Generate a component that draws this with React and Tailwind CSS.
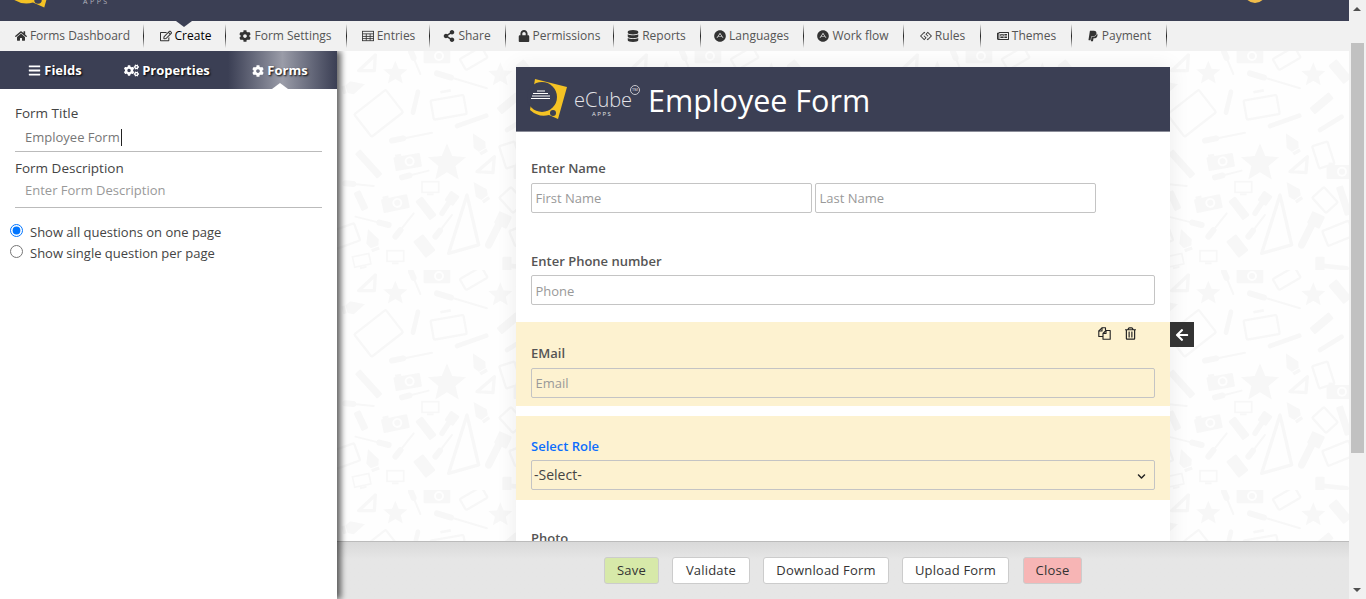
import {
  FaHome, FaRegEdit, FaCog, FaShareAlt, FaLock, FaDatabase, FaAdn, FaGg,
  FaRegNewspaper, FaPaypal, FaBars, FaCogs, FaRegTrashAlt, FaArrowLeft, FaChevronDown,
} from "react-icons/fa";

function TableIcon({ className }) {
  return (
    <svg viewBox="0 0 14 12" className={className} fill="none" stroke="currentColor" strokeWidth="1">
      <rect x="0.5" y="0.5" width="13" height="11" />
      <path d="M0.5 3.5h13M0.5 6.5h13M0.5 9h13M5 3.5v8M9.500 3.500v8" />
    </svg>
  );
}

function FilesIcon({ className }) {
  return (
    <svg viewBox="0 0 13 13" className={className} fill="none" stroke="currentColor" strokeWidth="1.100" strokeLinejoin="round">
      <path d="M5 9.500H0.800V4L4 0.800H7.500V3.500" />
      <path d="M4 0.800V4H0.800" />
      <path d="M5 12.200V6.500L8 3.500H12.200V12.200Z" />
      <path d="M8 3.500V6.500H5" />
    </svg>
  );
}

const navItems = [
  { label: "Forms Dashboard", icon: FaHome, w: "w-[143px] pl-[2px]" },
  { label: "Create", icon: FaRegEdit, w: "w-[82px] pl-[3px]", active: true },
  { label: "Form Settings", icon: FaCog, w: "w-[121px]" },
  { label: "Entries", icon: TableIcon, w: "w-[83px] pl-[2px]" },
  { label: "Share", icon: FaShareAlt, w: "w-[76px]" },
  { label: "Permissions", icon: FaLock, w: "w-[108px]" },
  { label: "Reports", icon: FaDatabase, w: "w-[87px]" },
  { label: "Languages", icon: FaAdn, w: "w-[103px]" },
  { label: "Work flow", icon: FaAdn, w: "w-[100px]" },
  { label: "Rules", icon: FaGg, w: "w-[77px] pl-[2px]" },
  { label: "Themes", icon: FaRegNewspaper, w: "w-[91px] pl-[2px]" },
  { label: "Payment", icon: FaPaypal, w: "w-[95px] pl-[1px]" },
];

function Logo({ className }) {
  return (
    <svg viewBox="0 0 44 44" className={className}>
      <path d="M10 2 L42 10 L33 42 L24 38 Q14 41 5 33 Z" fill="#f4c224" />
      <circle cx="17" cy="20" r="15" fill="#3b3f54" />
      <circle cx="28" cy="36" r="3" fill="#3b3f54" />
      <path d="M12 14h8M8 16.500h15M7 19h18M6 21.500h19" stroke="#fff" strokeWidth="1" />
    </svg>
  );
}

const ink = "#f7f7f7";

// doodle wallpaper, coordinates are 3x picture pixels
function Star({ x, y, r = 38 }) {
  const pts = [];
  for (let i = 0; i < 10; i++) {
    const rad = i % 2 ? r * 0.45 : r;
    const a = (Math.PI / 5) * i - Math.PI / 2;
    pts.push(`${x + rad * Math.cos(a)},${y + rad * Math.sin(a)}`);
  }
  return <polygon points={pts.join(" ")} />;
}

function Box({ x, y, w, h, rot = 0, outline }) {
  return (
    <rect
      x={x - w / 2}
      y={y - h / 2}
      width={w}
      height={h}
      rx="4"
      transform={`rotate(${rot} ${x} ${y})`}
      fill={outline ? "none" : undefined}
      stroke={outline ? ink : undefined}
      strokeWidth={outline ? 7 : undefined}
    />
  );
}

function Camera({ x, y, rot = 0 }) {
  return (
    <g transform={`rotate(${rot} ${x} ${y})`}>
      <rect x={x - 40} y={y - 20} width="80" height="42" rx="3" />
      <rect x={x - 34} y={y - 27} width="18" height="8" />
      <circle cx={x + 6} cy={y} r="15" fill="#fefefe" />
      <circle cx={x + 6} cy={y} r="9" />
    </g>
  );
}

function Stick({ x1, y1, x2, y2, w = 14 }) {
  return <line x1={x1} y1={y1} x2={x2} y2={y2} stroke={ink} strokeWidth={w} strokeLinecap="round" />;
}

function Brush({ x1, y1, x2, y2 }) {
  const mx = x1 + (x2 - x1) * 0.28;
  const my = y1 + (y2 - y1) * 0.28;
  return (
    <g>
      <Stick x1={x1} y1={y1} x2={mx} y2={my} w={18} />
      <Stick x1={mx} y1={my} x2={x2} y2={y2} w={6} />
    </g>
  );
}

function Nib({ x, y, rot = -30 }) {
  return (
    <g transform={`rotate(${rot} ${x} ${y})`}>
      <path d={`M${x} ${y - 35} L${x + 20} ${y + 5} L${x + 12} ${y + 22} L${x - 12} ${y + 22} L${x - 20} ${y + 5} Z`} />
      <rect x={x - 12} y={y + 25} width="24" height="10" />
    </g>
  );
}

function Tri({ points }) {
  return <polygon points={points} fill="none" stroke={ink} strokeWidth="10" strokeLinejoin="round" />;
}

function Monitor({ x, y, rot = 0 }) {
  return (
    <g transform={`rotate(${rot} ${x} ${y})`}>
      <rect x={x - 25} y={y - 20} width="50" height="32" fill="none" stroke={ink} strokeWidth="5" />
      <rect x={x - 10} y={y + 15} width="20" height="6" />
    </g>
  );
}

function Doodles() {
  return (
    <svg className="absolute inset-0 w-full h-full">
      <defs>
        <pattern id="doodle" x="0" y="-1" width="271" height="220" patternUnits="userSpaceOnUse">
          <g transform="scale(0.3333)" fill={ink}>
            <Tri points="65,62 115,15 112,62" />
            <Star x={175} y={70} />
            <Brush x1={222} y1={5} x2={250} y2={72} />
            <Camera x={300} y={18} />
            <Box x={410} y={25} w={75} h={38} rot={-30} outline />
            <Brush x1={300} y1={70} x2={450} y2={115} />
            <Star x={490} y={75} />
            <Box x={570} y={65} w={32} h={72} rot={-40} />
            <Nib x={50} y={112} rot={75} />
            <Box x={125} y={190} w={120} h={85} rot={-38} outline />
            <Stick x1={243} y1={125} x2={228} y2={188} />
            <Box x={335} y={172} w={100} h={58} rot={-10} outline />
            <rect x="310" y="120" width="32" height="8" transform="rotate(-10 325 125)" />
            <Stick x1={360} y1={228} x2={448} y2={197} />
            <Box x={515} y={160} w={25} h={75} rot={50} />
            <Stick x1={510} y1={240} x2={575} y2={200} />
            <Brush x1={165} y1={272} x2={285} y2={248} />
            <Nib x={425} y={280} rot={-30} />
            <Box x={95} y={342} w={22} h={100} rot={-42} />
            <Camera x={212} y={335} rot={-10} />
            <Star x={330} y={340} r={60} />
            <Tri points="420,365 472,320 468,368" />
            <Box x={520} y={315} w={48} h={70} rot={-18} outline />
            <Camera x={570} y={365} />
            <Brush x1={195} y1={382} x2={275} y2={362} />
            <Brush x1={25} y1={400} x2={110} y2={408} />
            <Monitor x={280} y={415} />
            <Nib x={430} y={425} rot={-35} />
            <Box x={72} y={452} w={22} h={60} rot={-25} />
            <Camera x={175} y={460} rot={-12} />
            <Box x={267} y={475} w={26} h={72} rot={-38} />
            <Box x={345} y={445} w={32} h={35} rot={35} />
            <Stick x1={315} y1={490} x2={338} y2={455} w={16} />
            <Box x={525} y={450} w={48} h={62} rot={-42} outline />
            <Box x={582} y={452} w={22} h={90} rot={-18} />
            <Brush x1={155} y1={525} x2={55} y2={500} />
            <Brush x1={175} y1={560} x2={230} y2={490} />
            <Brush x1={295} y1={560} x2={345} y2={495} />
            <Tri points="335,610 390,435 425,585" />
            <Box x={498} y={510} w={42} h={40} rot={25} />
            <Stick x1={455} y1={585} x2={485} y2={525} w={22} />
            <Box x={262} y={588} w={38} h={62} rot={-38} />
            <Nib x={105} y={570} rot={-20} />
            <Box x={25} y={558} w={75} h={55} rot={-20} outline />
            <Box x={565} y={550} w={85} h={48} rot={-22} outline />
            <Monitor x={175} y={622} />
            <Monitor x={75} y={635} rot={-12} />
            <Box x={510} y={645} w={28} h={50} />
            <Stick x1={525} y1={648} x2={590} y2={655} />
          </g>
        </pattern>
      </defs>
      <rect width="100%" height="100%" fill="url(#doodle)" />
    </svg>
  );
}

function Field({ children, label, className, labelClass = "text-[#555] mb-[6px]" }) {
  return (
    <div className={`h-[84px] px-[15px] ${className}`}>
      <div className={`h-[18px] text-[13px] leading-[18px] font-semibold ${labelClass}`}>{label}</div>
      {children}
    </div>
  );
}

function TextBox({ placeholder, className }) {
  return (
    <input
      placeholder={placeholder}
      className={`h-[30px] border border-[#c4c4c4] rounded-[2px] pl-[3.500px] pr-[4px] text-[13px] text-[#555] placeholder:text-[#999] ${className}`}
    />
  );
}

function FooterButton({ label, className = "bg-white text-[#333]" }) {
  return (
    <button className={`h-[27px] border border-[#ccc] rounded-[3px] text-[13px] tracking-[0.2px] ${className}`}>
      {label}
    </button>
  );
}

export default function App() {
  return (
    <div className="w-[1366px] h-[599px] flex overflow-hidden bg-white text-[#444] font-['Open_Sans',sans-serif]">
      <div className="w-[1349px] h-full flex flex-col">
        {/* Top bar, scrolled partly out of view */}
        <div className="relative h-[21px] shrink-0 overflow-hidden bg-[#3b3f54]">
          <Logo className="absolute left-[3px] top-[-45px] w-[55px] h-[55px]" />
          <span className="absolute left-[83px] top-[-3px] text-[7px] leading-[10px] tracking-[2.500px] text-[#b5b6bf]">APPS</span>
          <div className="absolute left-[1244px] top-[-19px] w-[22px] h-[22px] rounded-full bg-[#f2bd4b]" />
        </div>

        {/* Nav */}
        <div className="relative z-30 h-[30px] shrink-0 flex bg-[#f1f1f1]">
          {navItems.map((item) => {
            const Icon = item.icon;
            return (
              <div
                key={item.label}
                className={`${item.w} relative h-full shrink-0 flex items-center justify-center gap-[3px] text-[12px] ${item.active ? "text-black font-medium" : "text-[#555]"}`}
              >
                <Icon className="w-[12px] h-[12px] text-[#333]" />
                <span>{item.label}</span>
                <div className="absolute right-[-1px] top-[3px] h-[24px] w-px bg-gradient-to-b from-transparent via-[#222] to-transparent" />
                {item.active && (
                  <div className="absolute left-[33px] top-0 w-0 h-0 border-x-[8px] border-x-transparent border-t-[6px] border-t-[#3b3f54]" />
                )}
              </div>
            );
          })}
        </div>

        <div className="flex-1 min-h-0 flex">
          {/* Sidebar */}
          <div className="relative z-20 w-[337px] h-full shrink-0 bg-white shadow-[4px_0_6px_rgba(0,0,0,0.6)]">
            <div className="h-[38px] flex pt-[1px] bg-[#3b3f54] text-white text-[13px] font-bold [text-shadow:1px_1px_2px_#000]">
              <div className="w-[112px] flex items-center justify-center gap-[3px] pr-[2px]">
                <FaBars className="w-[13px] h-[13px]" /> Fields
              </div>
              <div className="w-[116px] flex items-center justify-center gap-[3px] pr-[6px]">
                <FaCogs className="w-[15px] h-[15px]" /> Properties
              </div>
              <div className="relative w-[109px] -mt-[1px] flex items-center justify-center gap-[3px] pr-[5px] pt-[1px] bg-gradient-to-r from-[#3b3f54] via-[#9a9ca8] to-[#3b3f54]">
                <FaCog className="w-[12px] h-[12px]" /> Forms
                <div className="absolute left-[44px] bottom-0 w-0 h-0 border-x-[8px] border-x-transparent border-b-[6px] border-b-white" />
              </div>
            </div>

            <div className="pt-[15px] pl-[15px] w-[322px]">
              <div className="text-[13.500px] leading-[18px] font-medium text-[#444]">Form Title</div>
              <div className="h-[29px] mt-[1px] pl-[10px] border-b border-[#bbb] flex items-start">
                <span className="h-[17px] mt-[6px] pr-px border-r border-[#222] text-[13px] leading-[17px] text-[#777]">Employee Form</span>
              </div>
              <div className="mt-[7px] text-[13.500px] leading-[18px] font-medium text-[#444]">Form Description</div>
              <div className="h-[31px] pl-[10px] border-b border-[#bbb] text-[13px] leading-[27px] text-[#999]">Enter Form Description</div>
            </div>

            <label className="flex items-center gap-[7px] ml-[10px] mt-[14px] h-[21px] text-[13px] text-[#444]">
              <input type="radio" name="paging" defaultChecked className="w-[13px] h-[13px] m-0 mb-[4px]" />
              Show all questions on one page
            </label>
            <label className="flex items-center gap-[7px] ml-[10px] h-[21px] text-[13px] text-[#444]">
              <input type="radio" name="paging" className="w-[13px] h-[13px] m-0 mb-[4px]" />
              Show single question per page
            </label>
          </div>

          <div className="flex-1 min-w-0 h-full flex flex-col">
            {/* Canvas */}
            <div className="relative flex-1 min-h-0 overflow-hidden bg-[#fefefe] pt-[16px]">
              <Doodles />
              <div className="relative w-[654px] mx-auto bg-white shadow-[0_0_20px_rgba(0,0,0,0.08)]">
                <div className="h-[65px] flex items-center bg-[#3b3f54] border-b border-[#8a8c98] text-white">
                  <Logo className="w-[44px] h-[44px] ml-[9px] shrink-0" />
                  <div className="relative w-[80px] ml-[5px] h-[44px] shrink-0 text-[#e4e4e8]">
                    <span className="absolute left-0 top-[16px] text-[20px] leading-[14px] font-light">eCube</span>
                    <span className="absolute left-[18px] top-[34px] text-[6px] leading-[6px] tracking-[1.500px]">APPS</span>
                    <span className="absolute left-[56px] top-[8px] w-[10px] h-[10px] rounded-full border border-[#c8c8ce] flex items-center justify-center text-[4px] leading-none">TM</span>
                  </div>
                  <h1 className="-ml-[6px] pt-[2px] text-[30.500px] leading-[38px] font-medium">Employee Form</h1>
                </div>

                <div className="pt-[5px]">
                  <Field label="Enter Name" className="pt-[22px] mb-[9px]">
                    <div className="flex gap-[3px]">
                      <TextBox placeholder="First Name" className="w-[281px]" />
                      <TextBox placeholder="Last Name" className="w-[281px]" />
                    </div>
                  </Field>
                  <Field label="Enter Phone number" labelClass="text-[#555] mb-[5px]" className="pt-[22px] mb-[8px]">
                    <TextBox placeholder="Phone" className="w-[624px] pt-px" />
                  </Field>
                  <Field label="EMail" className="relative pt-[22px] mb-[10px] bg-[#fdf2d0]">
                    <TextBox placeholder="Email" className="w-[624px] bg-[#fdf2d0]" />
                    <div className="absolute right-[34px] top-[5px] flex gap-[14px] text-[#222]">
                      <FilesIcon className="w-[13px] h-[13px]" />
                      <FaRegTrashAlt className="w-[11px] h-[13px]" />
                    </div>
                    <div className="absolute left-full top-0 w-[24px] h-[25px] flex items-center justify-center bg-[#333] text-white">
                      <FaArrowLeft className="w-[14px] h-[14px]" />
                    </div>
                  </Field>
                  <Field label="Select Role" labelClass="text-[#0d6efd] mb-[5px]" className="pt-[21px] mb-[8px] bg-[#fdf2d0]">
                    <div className="relative w-[624px]">
                      <select className="w-full h-[30px] appearance-none border border-[#c4c4c4] rounded-[2px] bg-[#fdf2d0] px-[2px] pb-[2px] text-[14px] text-[#444]">
                        <option>-Select-</option>
                      </select>
                      <FaChevronDown className="absolute right-[9px] top-[12px] w-[9px] h-[9px] text-[#222]" />
                    </div>
                  </Field>
                  <Field label="Photo" className="pt-[21px]" />
                </div>
              </div>
            </div>

            {/* Footer */}
            <div className="relative z-10 h-[58px] shrink-0 border-t border-[#bbb] bg-gradient-to-b from-[#d9d9d9] to-[#e6e6e6] to-30% flex justify-center gap-[13px] pt-[15px]">
              <FooterButton label="Save" className="w-[55px] bg-[#d7e9a9] text-[#333]" />
              <FooterButton label="Validate" className="w-[78px] bg-white text-[#333]" />
              <FooterButton label="Download Form" className="w-[126px] bg-white text-[#333]" />
              <FooterButton label="Upload Form" className="w-[107px] bg-white text-[#333]" />
              <FooterButton label="Close" className="w-[59px] ml-px bg-[#f7b5b5] text-[#333]" />
            </div>
          </div>
        </div>
      </div>

      {/* Page scrollbar */}
      <div className="relative w-[17px] h-full shrink-0 bg-[#f1f1f1]">
        <div className="absolute left-[3px] top-[7px] w-0 h-0 border-x-[4px] border-x-transparent border-b-[4px] border-b-[#505050] ml-[1px]" />
        <div className="absolute left-[2px] top-[43px] w-[13px] h-[410px] bg-[#c1c1c1]" />
        <div className="absolute left-[3px] bottom-[7px] w-0 h-0 border-x-[4px] border-x-transparent border-t-[4px] border-t-[#505050] ml-[1px]" />
      </div>
    </div>
  );
}
